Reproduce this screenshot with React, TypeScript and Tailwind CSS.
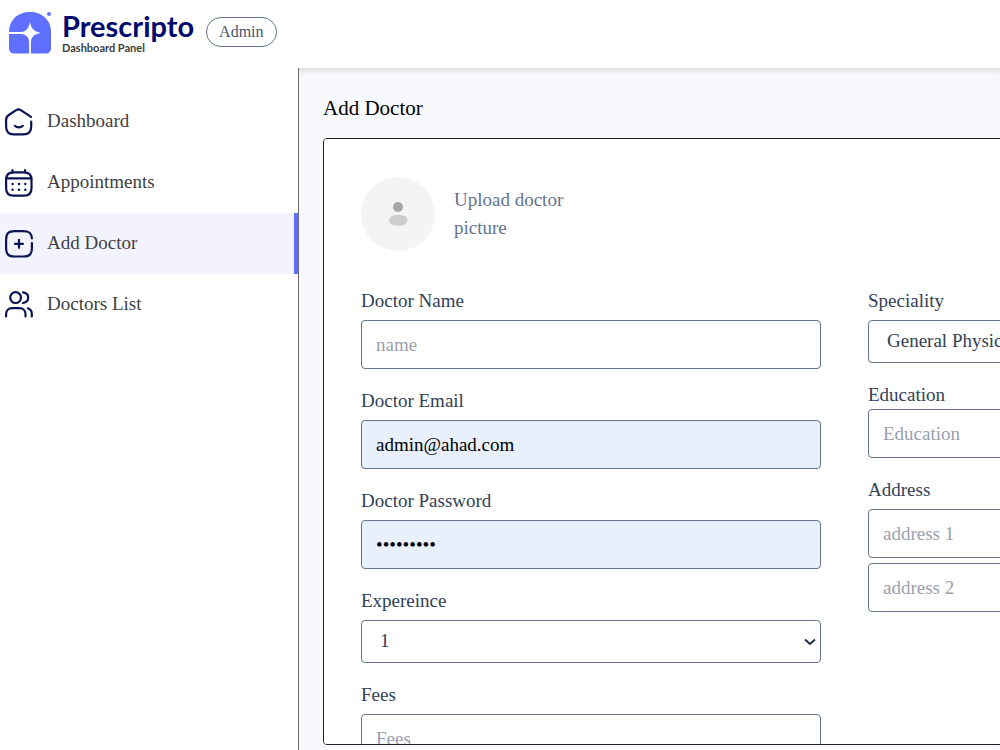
import { useState } from "react";
import type { ReactNode } from "react";

const DashboardIcon = () => (
	<svg viewBox="0 0 28 28" className="w-7 h-7" fill="none" stroke="#0b1354" strokeWidth="2.2" strokeLinecap="round" strokeLinejoin="round">
		<path d="M26 8.800L15.800 2.200C14.300 1.200 12.700 1.200 11.200 2.200L3.800 7C1.900 8.300 1.100 9.800 1.100 12V18.500C1.100 24 3.500 26.400 8.500 26.400H18.800C24 26.400 26.200 24 26.200 18.500V13.600" />
		<path d="M9.800 17.800C12 20 15.600 20 17.800 17.800" />
	</svg>
);

const AppointmentIcon = () => (
	<svg viewBox="0 0 28 28" className="w-7 h-7" fill="none" stroke="#0b1354" strokeWidth="2.2" strokeLinecap="round" strokeLinejoin="round">
		<path d="M7.500 1.200V3.400M20 1.200V3.400M1.200 9.300H26.400" />
		<path d="M8.500 3.400H19C24 3.400 26.500 5.700 26.500 10.500V19C26.500 24.500 24.200 26.700 19 26.700H8.500C3.500 26.700 1.100 24.500 1.100 19V10.500C1.100 5.700 3.700 3.400 8.500 3.400Z" />
		<path strokeWidth="2.400" d="M7.600 15h.01M14 15h.01M20.300 15h.01M7.600 20.700h.01M14 20.700h.01M20.300 20.700h.01" />
	</svg>
);

const AddIcon = () => (
	<svg viewBox="0 0 28 28" className="w-7 h-7" fill="none" stroke="#0b1354" strokeWidth="2.2" strokeLinecap="round" strokeLinejoin="round">
		<path d="M26.900 13.200V17.500C26.900 24.500 24.500 26.500 18 26.500H9.800C3.500 26.500 1.100 24.500 1.100 17.500V9.800C1.100 3.200 3.500 1.100 9.800 1.100H18C24 1.100 26.700 3 26.900 8.500" />
		<path d="M14 9.800V17.800M10 13.800H18" />
	</svg>
);

const PeopleIcon = () => (
	<svg viewBox="0 0 28 28" className="w-7 h-7" fill="none" stroke="#0b1354" strokeWidth="2.2" strokeLinecap="round" strokeLinejoin="round">
		<circle cx="10.600" cy="6.600" r="5.400" />
		<path d="M18 1.400C21 1.800 23.200 3.900 23.200 6.600C23.200 9.400 21 11.600 18 12" />
		<path d="M1.100 25.500V23C1.100 19.600 3.600 17.200 7 17.200H14.500C17.900 17.200 20.500 19.600 20.500 23V25.500" />
		<path d="M22.800 17.300C25.400 18.100 26.800 20.200 26.800 23V25.500" />
	</svg>
);

const navItems = [
	{ label: "Dashboard", icon: <DashboardIcon /> },
	{ label: "Appointments", icon: <AppointmentIcon /> },
	{ label: "Add Doctor", icon: <AddIcon /> },
	{ label: "Doctors List", icon: <PeopleIcon /> },
];

const inputClass =
	"w-full h-[49px] px-3.5 border border-slate-500 rounded text-[19px] outline-none placeholder:text-gray-400";

const Logo = () => (
	<div className="flex items-center gap-2.5">
		<svg viewBox="0 0 44 44" className="w-11 h-11 mt-0.5">
			<path fill="#5f6fff" d="M1 21C1 9 10 1 22 1S43 9 43 21V37C43 40.500 41 42.500 37.500 42.500H6.500C3 42.500 1 40.500 1 37Z" />
			<path fill="#fff" d="M22 11C23.300 17.500 25.500 20.400 33 22C25.500 23.600 23.600 25.500 22.900 31V43H21.100V31C20.400 25.500 18.500 23.600 13 22.900H0V21.100H13C18.500 20.400 20.700 17.500 22 11Z" />
			<circle cx="41" cy="3" r="2" fill="#5f6fff" />
		</svg>
		<div className="font-['Lato','Liberation_Sans',sans-serif]">
			<div className="text-[29px] leading-8 font-bold text-[#000b6d]">Prescripto</div>
			<div className="text-[11px] leading-3 font-bold text-[#3c3c3c]">Dashboard Panel</div>
		</div>
	</div>
);

const Field = ({ id, label, tight, children }: { id: string; label: string; tight?: boolean; children: ReactNode }) => (
	<div className={`flex flex-col ${tight ? "" : "gap-[5px]"}`}>
		<label htmlFor={id} className="leading-7">
			{label}
		</label>
		{children}
	</div>
);

const Select = ({ id, options }: { id: string; options: string[] }) => (
	<div className="relative">
		<select
			id={id}
			className="block w-full h-[43px] pl-[18px] pr-8 border border-slate-500 rounded text-[19px] appearance-none bg-white outline-none"
		>
			{options.map((o) => (
				<option key={o}>{o}</option>
			))}
		</select>
		<svg viewBox="0 0 12 8" className="absolute right-[5px] top-[18px] w-3 h-2 pointer-events-none" fill="none" stroke="#1e2f4a" strokeWidth="2">
			<path d="M1 1.500L6 6L11 1.500" />
		</svg>
	</div>
);

const AddDoctor = () => {
	const [email, setEmail] = useState("admin@ahad.com");
	const [password, setPassword] = useState("admin1234");

	return (
		<form className="px-6 pt-6">
			<h1 className="mb-3.5 text-[21px] leading-8">Add Doctor</h1>
			<div className="w-[1043px] max-h-[calc(100vh-143px)] px-[37px] py-[38px] border border-[#1f1f1f] rounded bg-white overflow-y-auto">
				<label htmlFor="doc-img" className="flex items-center gap-[19px] mb-9 cursor-pointer text-slate-500">
					<svg viewBox="0 0 74 74" className="w-[74px] h-[74px]">
						<circle cx="37" cy="37" r="37" fill="#f4f4f4" />
						<circle cx="37" cy="30" r="5" fill="#a6a6a6" />
						<rect x="28" y="38" width="18.500" height="10.500" rx="7" ry="5.200" fill="#cdcdcd" />
					</svg>
					<span className="leading-7">
						Upload doctor
						<br />
						picture
					</span>
				</label>
				<input id="doc-img" type="file" hidden />

				<div className="grid grid-cols-2 gap-[47px] items-start text-slate-700">
					<div className="flex flex-col gap-[18px]">
						<Field id="name" label="Doctor Name">
							<input id="name" type="text" placeholder="name" className={inputClass} />
						</Field>
						<Field id="email" label="Doctor Email">
							<input
								id="email"
								type="email"
								value={email}
								onChange={(e) => setEmail(e.target.value)}
								className={`${inputClass} bg-[#e8f0fe] text-black`}
							/>
						</Field>
						<Field id="password" label="Doctor Password">
							<input
								id="password"
								type="password"
								value={password}
								onChange={(e) => setPassword(e.target.value)}
								className={`${inputClass} bg-[#e8f0fe] text-black`}
							/>
						</Field>
						<Field id="experience" label="Expereince">
							<Select id="experience" options={["1", "2", "3", "4", "5"]} />
						</Field>
						<Field id="fees" label="Fees">
							<input id="fees" type="text" placeholder="Fees" className={inputClass} />
						</Field>
					</div>

					<div className="flex flex-col gap-[18px]">
						<Field id="speciality" label="Speciality">
							<Select id="speciality" options={["General Physician", "Gynecologist", "Dermatologist"]} />
						</Field>
						<Field id="education" label="Education" tight>
							<input id="education" type="text" placeholder="Education" className={inputClass} />
						</Field>
						<Field id="address1" label="Address">
							<input id="address1" type="text" placeholder="address 1" className={inputClass} />
							<input type="text" placeholder="address 2" aria-label="Address line 2" className={inputClass} />
						</Field>
					</div>
				</div>
			</div>
		</form>
	);
};

const App = () => {
	const [active, setActive] = useState("Add Doctor");

	return (
		<div className="h-screen flex flex-col bg-white overflow-hidden font-['Liberation_Serif',serif] text-[19px] text-black">
			<header className="h-[68px] shrink-0 flex items-center gap-3 pl-2 pb-1">
				<Logo />
				<span className="px-3 border border-slate-500 rounded-full text-[16px] leading-7 text-slate-600">Admin</span>
			</header>
			<div className="flex flex-1 min-h-0">
				<nav className="w-[299px] shrink-0 pt-[23px] border-r border-[#6b6b6b]">
					{navItems.map((item) => (
						<a
							key={item.label}
							href="#"
							onClick={() => setActive(item.label)}
							className={`flex items-center gap-3.5 h-[61px] pl-[5px] text-[#3f3f3f] ${
								active === item.label ? "bg-[#f2f3ff] border-r-4 border-[#5f6fff]" : ""
							}`}
						>
							{item.icon}
							{item.label}
						</a>
					))}
				</nav>
				<main className="flex-1 min-w-0 overflow-hidden bg-[#f8f9fd] shadow-[inset_0_6px_6px_-4px_rgba(0,0,0,0.15)]">
					<AddDoctor />
				</main>
			</div>
		</div>
	);
};

export default App;
